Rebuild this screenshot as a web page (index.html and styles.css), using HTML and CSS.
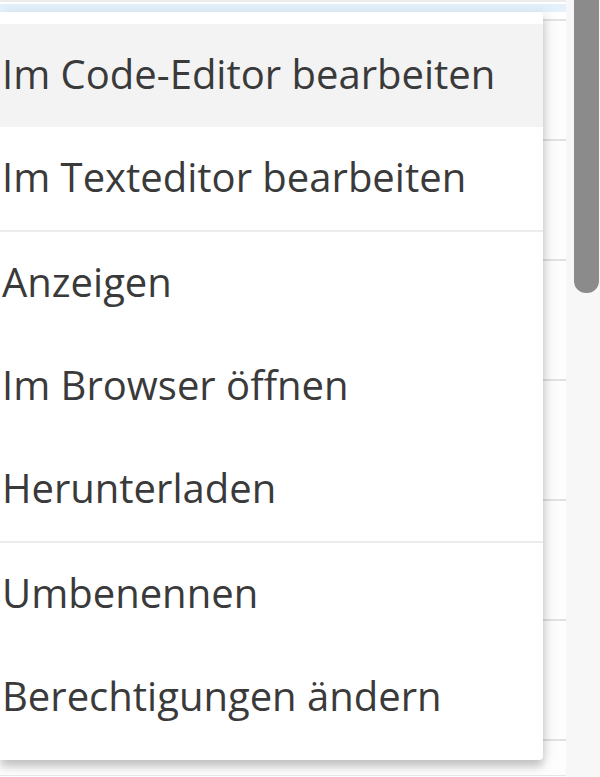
FILE: index.html
```html
<!DOCTYPE html>
<html lang="de">
<head>
<meta charset="utf-8">
<title>Kontextmenü</title>
<link rel="stylesheet" href="styles.css">
</head>
<body>
<div class="page">
  <div class="content">
    <div class="list">
      <div class="topline"></div>
      <div class="selected-band"></div>
      <div class="row"></div>
      <div class="row"></div>
      <div class="row"></div>
      <div class="row"></div>
      <div class="row"></div>
      <div class="row"></div>
      <div class="row"></div>
    </div>
    <div class="track"></div>
  </div>
  <div class="scroll-thumb"></div>
  <div class="bottom-line"></div>

  <ul class="menu">
    <li class="item hover">Im Code-Editor bearbeiten</li>
    <li class="item">Im Texteditor bearbeiten</li>
    <li class="sep"></li>
    <li class="item">Anzeigen</li>
    <li class="item">Im Browser öffnen</li>
    <li class="item">Herunterladen</li>
    <li class="sep"></li>
    <li class="item">Umbenennen</li>
    <li class="item">Berechtigungen ändern</li>
  </ul>
</div>
</body>
</html>
```

FILE: styles.css
```css
* { box-sizing: border-box; }
html, body { margin: 0; padding: 0; background: #ffffff; }
body { font-family: "Open Sans", "Noto Sans", sans-serif; }

.page {
  position: relative;
  width: 600px;
  height: 777px;
  overflow: hidden;
  background: #ffffff;
}

.content {
  display: flex;
  height: 100%;
}

.list {
  width: 566px;
  flex: none;
  display: flex;
  flex-direction: column;
}

.topline {
  height: 2px;
  background: #ececec;
  flex: none;
}

.selected-band {
  height: 8px;
  margin-top: 2px;
  margin-bottom: 7px;
  background: #e4f0fb;
  flex: none;
}

.row {
  height: 120px;
  flex: none;
  border-top: 2px solid #e2e2e2;
  background: #fdfdfd;
}

.track {
  flex: 1;
  background: #f7f7f7;
}

.scroll-thumb {
  position: absolute;
  left: 574px;
  top: 0;
  width: 25px;
  height: 293px;
  background: #8b8b8b;
  border-radius: 0 0 12px 12px;
}

.bottom-line {
  position: absolute;
  left: 0;
  top: 775px;
  width: 566px;
  height: 1px;
  background: #e6e6e6;
}

.menu {
  position: absolute;
  left: 0;
  top: 12px;
  width: 543px;
  margin: 0;
  padding: 12px 0 11px;
  list-style: none;
  background: #ffffff;
  border-radius: 0 4px 4px 0;
  box-shadow: 0 7px 8px rgba(0, 0, 0, 0.2), 4px 0 14px rgba(0, 0, 0, 0.08);
}

.item {
  height: 103px;
  display: flex;
  align-items: center;
  padding: 0 0 4px 2px;
  font-size: 40px;
  color: #3a3a3a;
  white-space: nowrap;
}

.item.hover {
  background: #f3f3f3;
}

.sep {
  height: 2px;
  background: #ececec;
}
```
